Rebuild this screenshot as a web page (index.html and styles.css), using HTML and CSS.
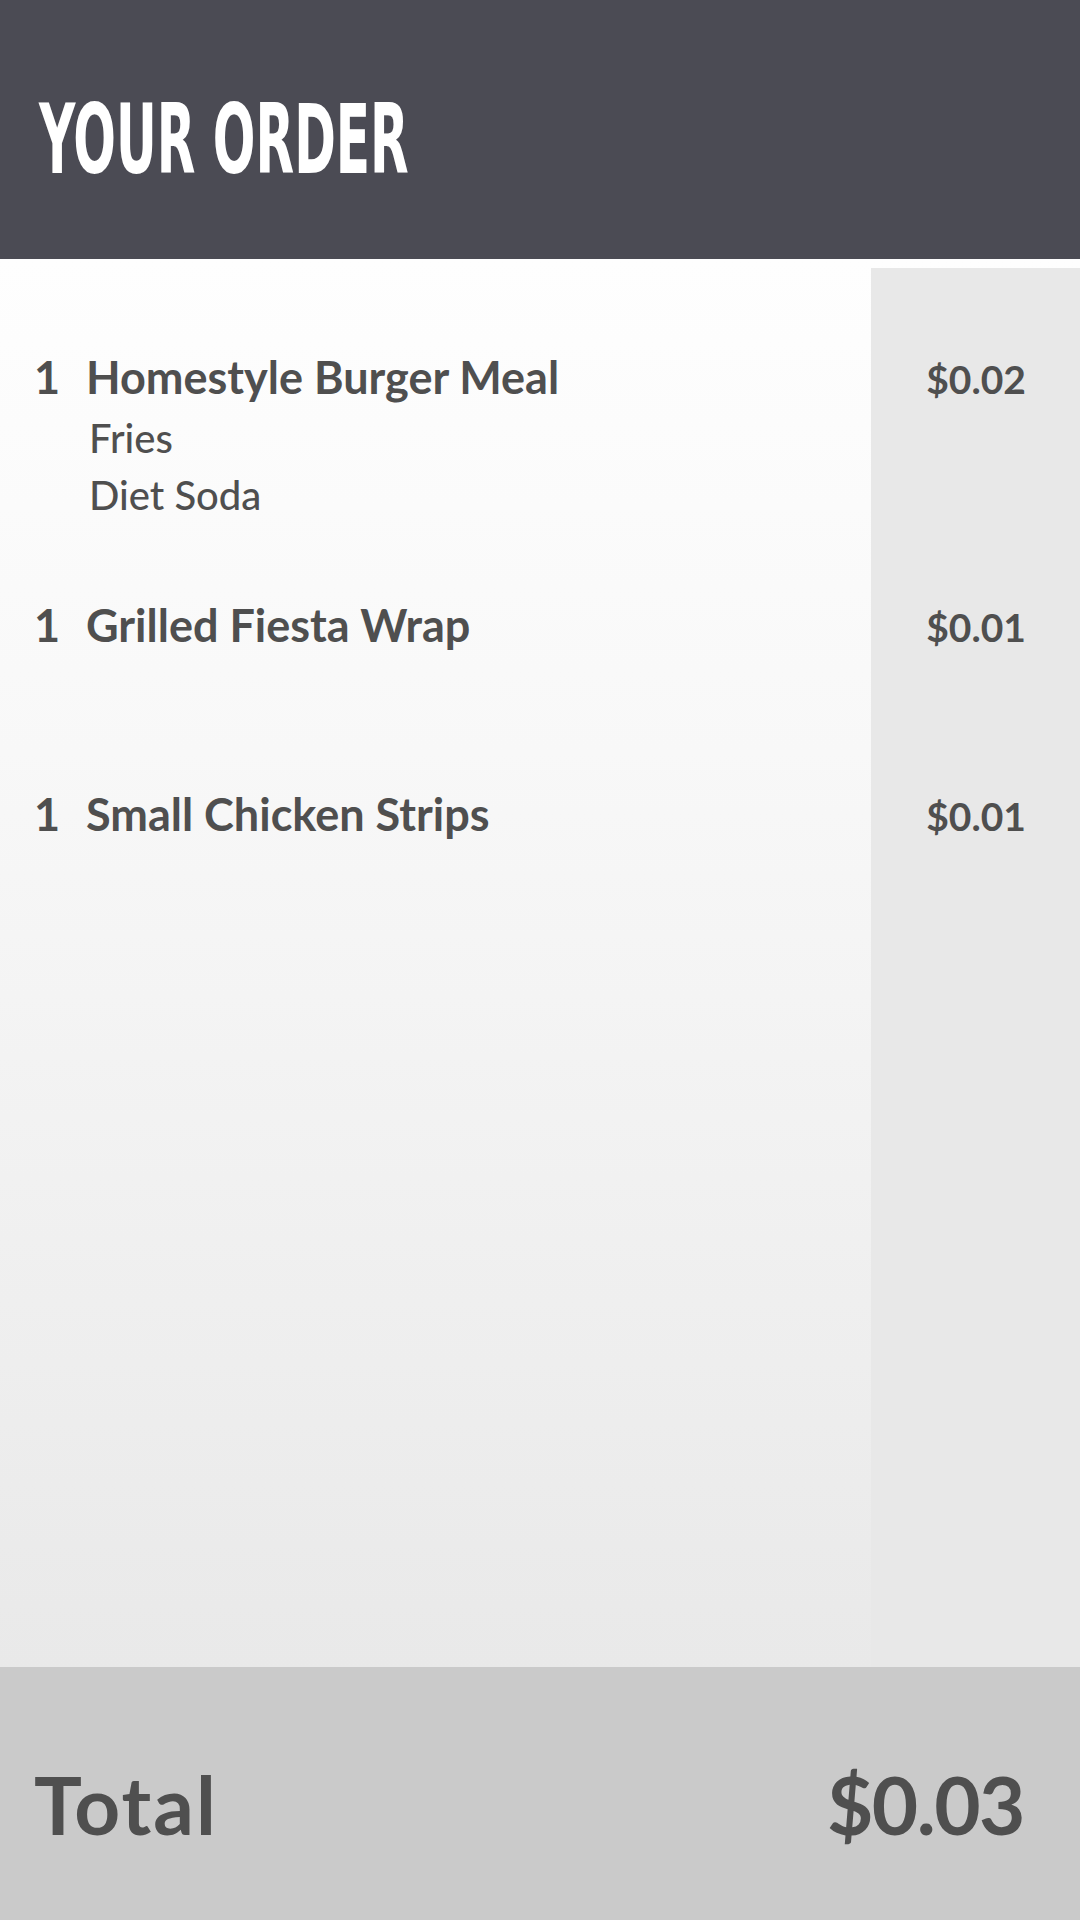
FILE: index.html
```html
<!DOCTYPE html>
<html lang="en">
<head>
<meta charset="utf-8">
<title>Your Order</title>
<link rel="stylesheet" href="styles.css">
</head>
<body>
<div class="screen">
  <header class="top">
    <h1 class="title"><span class="title-text">YOUR ORDER</span></h1>
  </header>
  <main class="list">
    <div class="row">
      <div class="qty">1</div>
      <div class="item">
        <div class="name">Homestyle Burger Meal</div>
        <div class="mod">Fries</div>
        <div class="mod">Diet Soda</div>
      </div>
      <div class="price">$0.02</div>
    </div>
    <div class="row">
      <div class="qty">1</div>
      <div class="item">
        <div class="name">Grilled Fiesta Wrap</div>
      </div>
      <div class="price">$0.01</div>
    </div>
    <div class="row">
      <div class="qty">1</div>
      <div class="item">
        <div class="name">Small Chicken Strips</div>
      </div>
      <div class="price">$0.01</div>
    </div>
  </main>
  <footer class="total">
    <div class="total-label">Total</div>
    <div class="total-value">$0.03</div>
  </footer>
</div>
</body>
</html>
```
FILE: styles.css
```css
* { box-sizing: border-box; }
html, body { margin: 0; padding: 0; }
body {
  width: 1080px;
  height: 1920px;
  font-family: Lato, "Open Sans", sans-serif;
  color: #4f4f4f;
  overflow: hidden;
}
.screen {
  display: flex;
  flex-direction: column;
  height: 1920px;
}
.top {
  height: 259px;
  background: #4b4b54;
  display: flex;
  align-items: center;
  padding-left: 39px;
  flex: none;
}
.title {
  margin: 0;
  color: #ffffff;
  font-family: "Liberation Sans Narrow", "DejaVu Sans Condensed", sans-serif;
  font-weight: 700;
  font-size: 97px;
  line-height: 1;
  padding-top: 20px;
}
.title-text {
  display: inline-block;
  transform: scaleX(0.575);
  transform-origin: left center;
  white-space: nowrap;
}
.list {
  flex: 1;
  padding-top: 88px;
  background:
    linear-gradient(#e8e8e8, #e8e8e8) right 0 top 9px / 209px 100% no-repeat,
    linear-gradient(180deg, #fefefe 0%, #f8f8f8 35%, #e9e9e9 100%);
}
.row {
  display: grid;
  grid-template-columns: 52px 1fr 209px;
  align-items: baseline;
  min-height: 189px;
  padding-bottom: 74px;
}
.qty {
  padding-left: 34px;
  font-weight: 700;
  font-size: 45px;
  line-height: 60px;
}
.item {
  padding-left: 34px;
}
.name {
  font-weight: 700;
  font-size: 45px;
  line-height: 60px;
  letter-spacing: 0;
}
.mod {
  font-weight: 500;
  font-size: 40px;
  line-height: 57px;
  padding-left: 3px;
  position: relative;
  top: 3px;
}
.price {
  text-align: right;
  padding-right: 54px;
  font-weight: 700;
  font-size: 39px;
  line-height: 60px;
}
.total {
  flex: none;
  height: 253px;
  background: #cacaca;
  display: flex;
  justify-content: space-between;
  align-items: center;
  padding: 20px 56px 0 34px;
  font-weight: 700;
  font-size: 80px;
  line-height: 1;
}
.total-label {
  letter-spacing: 2px;
}
.total-value {
  letter-spacing: -1.5px;
}
```
